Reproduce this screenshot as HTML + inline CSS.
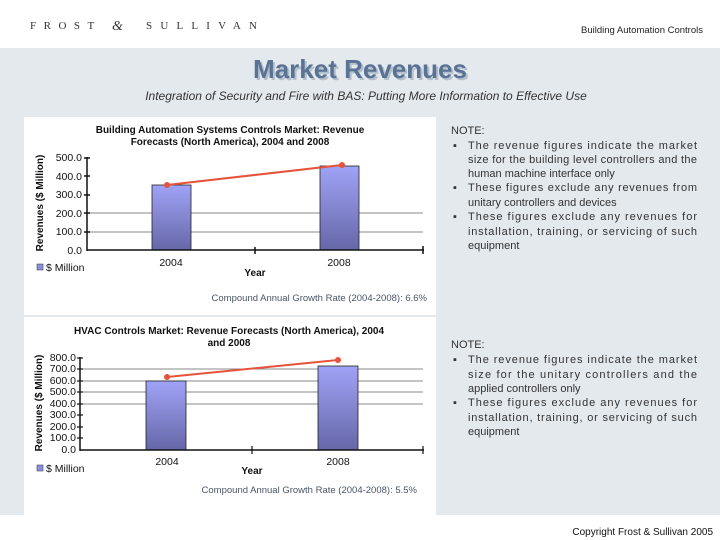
<!DOCTYPE html>
<html><head><meta charset="utf-8"><style>
html,body{margin:0;padding:0;width:720px;height:540px;overflow:hidden;background:#fff;font-family:"Liberation Sans",sans-serif}
</style></head><body>
<svg width="720" height="540" xmlns="http://www.w3.org/2000/svg" font-family="Liberation Sans, sans-serif">
<defs>
<linearGradient id="bar" x1="0" y1="0" x2="0" y2="1">
<stop offset="0" stop-color="#a0a3f6"/><stop offset="1" stop-color="#6667a8"/>
</linearGradient>
</defs>
<rect x="0" y="0" width="720" height="48" fill="#fff"/>
<text x="30" y="29" font-family="Liberation Serif, serif" font-size="11" letter-spacing="7.5" fill="#333">FROST</text>
<text x="112" y="30" font-family="Liberation Serif, serif" font-style="italic" font-size="14" fill="#333">&amp;</text>
<text x="146" y="29" font-family="Liberation Serif, serif" font-size="11" letter-spacing="8.2" fill="#333">SULLIVAN</text>
<text x="703" y="33" font-size="9.5" text-anchor="end" fill="#222">Building Automation Controls</text>
<rect x="0" y="48" width="720" height="467" fill="#e4e9ee"/>
<text x="362" y="80" font-size="26" font-weight="bold" text-anchor="middle" fill="#b4bfcc">Market Revenues</text>
<text x="360" y="78" font-size="26" font-weight="bold" text-anchor="middle" fill="#5a7394">Market Revenues</text>
<text x="366" y="100" font-size="12" font-style="italic" text-anchor="middle" fill="#333">Integration of Security and Fire with BAS: Putting More Information to Effective Use</text>

<!-- Chart 1 -->
<rect x="24" y="117" width="412" height="198" fill="#fff"/>
<text x="230" y="133" font-size="10" font-weight="bold" text-anchor="middle" fill="#111">Building Automation Systems Controls Market: Revenue</text>
<text x="230" y="145" font-size="10" font-weight="bold" text-anchor="middle" fill="#111">Forecasts (North America), 2004 and 2008</text>
<line x1="87" y1="213" x2="423" y2="213" stroke="#888"/>
<line x1="87" y1="232" x2="423" y2="232" stroke="#888"/>
<rect x="152" y="185" width="39" height="65" fill="url(#bar)" stroke="#222" stroke-width="0.8"/>
<rect x="320" y="166" width="39" height="84" fill="url(#bar)" stroke="#222" stroke-width="0.8"/>
<line x1="87" y1="157" x2="87" y2="251" stroke="#111" stroke-width="1.5"/>
<line x1="87" y1="250" x2="424" y2="250" stroke="#111" stroke-width="1.5"/>
<g stroke="#111" stroke-width="1.5"><line x1="84" y1="158" x2="90" y2="158"/><line x1="84" y1="176" x2="90" y2="176"/><line x1="84" y1="195" x2="90" y2="195"/><line x1="84" y1="213" x2="90" y2="213"/><line x1="84" y1="232" x2="90" y2="232"/><line x1="255" y1="247" x2="255" y2="254"/><line x1="423" y1="246" x2="423" y2="254"/></g>
<g font-size="10.5" fill="#111" text-anchor="end"><text x="82" y="161">500.0</text><text x="82" y="180">400.0</text><text x="82" y="198">300.0</text><text x="82" y="217">200.0</text><text x="82" y="235">100.0</text><text x="82" y="254">0.0</text></g>
<text transform="translate(43,203) rotate(-90)" font-size="10" font-weight="bold" text-anchor="middle" fill="#111">Revenues ($ Million)</text>
<polyline points="167,185 342,165" stroke="#e5533a" stroke-width="2" fill="none"/>
<circle cx="167" cy="185" r="3" fill="#e5533a"/><circle cx="342" cy="165" r="3" fill="#e5533a"/>
<text x="171" y="266" font-size="10.5" text-anchor="middle" fill="#111">2004</text>
<text x="339" y="266" font-size="10.5" text-anchor="middle" fill="#111">2008</text>
<text x="255" y="276" font-size="10" font-weight="bold" text-anchor="middle" fill="#111">Year</text>
<rect x="37" y="264" width="6" height="6" fill="#8c8fe0" stroke="#333" stroke-width="0.5"/>
<text x="46" y="271" font-size="10.5" fill="#111">$ Million</text>
<text x="427" y="301" font-size="9.5" text-anchor="end" fill="#4a5566">Compound Annual Growth Rate (2004-2008): 6.6%</text>

<!-- Chart 2 -->
<rect x="24" y="317" width="412" height="198" fill="#fff"/>
<text x="229" y="334" font-size="10" font-weight="bold" text-anchor="middle" fill="#111">HVAC Controls Market: Revenue Forecasts (North America), 2004</text>
<text x="229" y="346" font-size="10" font-weight="bold" text-anchor="middle" fill="#111">and 2008</text>
<g stroke="#888"><line x1="80" y1="369" x2="423" y2="369"/><line x1="80" y1="381" x2="423" y2="381"/><line x1="80" y1="392" x2="423" y2="392"/><line x1="80" y1="404" x2="423" y2="404"/></g>
<rect x="146" y="381" width="40" height="69" fill="url(#bar)" stroke="#222" stroke-width="0.8"/>
<rect x="318" y="366" width="40" height="84" fill="url(#bar)" stroke="#222" stroke-width="0.8"/>
<line x1="80" y1="357" x2="80" y2="451" stroke="#111" stroke-width="1.5"/>
<line x1="80" y1="450" x2="424" y2="450" stroke="#111" stroke-width="1.5"/>
<g stroke="#111" stroke-width="1.2"><line x1="77" y1="358" x2="83" y2="358"/><line x1="77" y1="369" x2="83" y2="369"/><line x1="77" y1="381" x2="83" y2="381"/><line x1="77" y1="392" x2="83" y2="392"/><line x1="77" y1="404" x2="83" y2="404"/><line x1="77" y1="415" x2="83" y2="415"/><line x1="77" y1="427" x2="83" y2="427"/><line x1="77" y1="438" x2="83" y2="438"/><line x1="252" y1="446" x2="252" y2="454"/><line x1="423" y1="446" x2="423" y2="454"/></g>
<g font-size="10.5" fill="#111" text-anchor="end"><text x="76" y="361">800.0</text><text x="76" y="372">700.0</text><text x="76" y="384">600.0</text><text x="76" y="395">500.0</text><text x="76" y="407">400.0</text><text x="76" y="418">300.0</text><text x="76" y="430">200.0</text><text x="76" y="441">100.0</text><text x="76" y="453">0.0</text></g>
<text transform="translate(42,403) rotate(-90)" font-size="10" font-weight="bold" text-anchor="middle" fill="#111">Revenues ($ Million)</text>
<polyline points="167,377 338,360" stroke="#e5533a" stroke-width="2" fill="none"/>
<circle cx="167" cy="377" r="3" fill="#e5533a"/><circle cx="338" cy="360" r="3" fill="#e5533a"/>
<text x="167" y="465" font-size="10.5" text-anchor="middle" fill="#111">2004</text>
<text x="338" y="465" font-size="10.5" text-anchor="middle" fill="#111">2008</text>
<text x="252" y="474" font-size="10" font-weight="bold" text-anchor="middle" fill="#111">Year</text>
<rect x="37" y="465" width="6" height="6" fill="#8c8fe0" stroke="#333" stroke-width="0.5"/>
<text x="46" y="472" font-size="10.5" fill="#111">$ Million</text>
<text x="417" y="493" font-size="9.5" text-anchor="end" fill="#4a5566">Compound Annual Growth Rate (2004-2008): 5.5%</text>

<!-- Notes -->
<g font-size="11" fill="#333">
<text x="451" y="134">NOTE:</text>
<text x="453" y="149">▪</text>
<text x="468" y="149" textLength="229" lengthAdjust="spacing">The revenue figures indicate the market</text>
<text x="468" y="163" textLength="229" lengthAdjust="spacing">size for the building level controllers and the</text>
<text x="468" y="177">human machine interface only</text>
<text x="453" y="191">▪</text>
<text x="468" y="191" textLength="229" lengthAdjust="spacing">These figures exclude any revenues from</text>
<text x="468" y="206">unitary controllers and devices</text>
<text x="453" y="220">▪</text>
<text x="468" y="220" textLength="229" lengthAdjust="spacing">These figures exclude any revenues for</text>
<text x="468" y="235" textLength="229" lengthAdjust="spacing">installation, training, or servicing of such</text>
<text x="468" y="249">equipment</text>

<text x="451" y="348">NOTE:</text>
<text x="453" y="363">▪</text>
<text x="468" y="363" textLength="229" lengthAdjust="spacing">The revenue figures indicate the market</text>
<text x="468" y="378" textLength="229" lengthAdjust="spacing">size for the unitary controllers and the</text>
<text x="468" y="392">applied controllers only</text>
<text x="453" y="406">▪</text>
<text x="468" y="406" textLength="229" lengthAdjust="spacing">These figures exclude any revenues for</text>
<text x="468" y="421" textLength="229" lengthAdjust="spacing">installation, training, or servicing of such</text>
<text x="468" y="435">equipment</text>
</g>
<text x="713" y="535" font-size="10" text-anchor="end" fill="#111">Copyright Frost &amp; Sullivan 2005</text>
</svg>
</body></html>
